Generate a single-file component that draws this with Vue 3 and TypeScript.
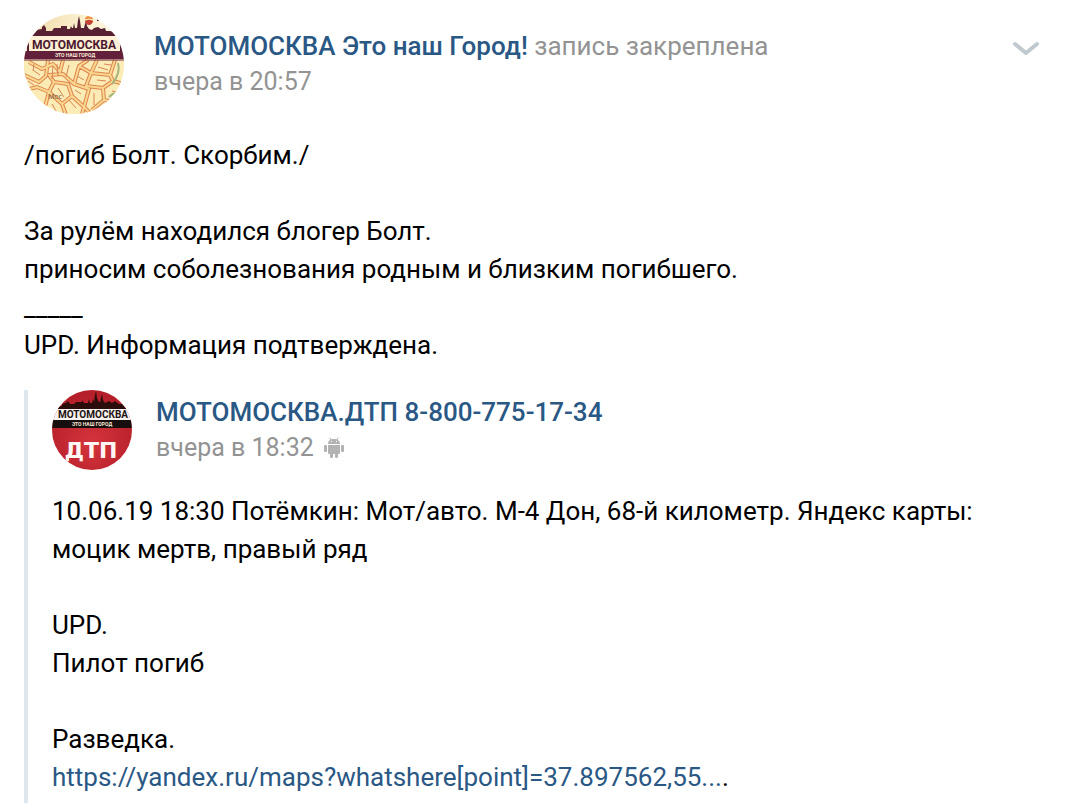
<script setup lang="ts">
interface Message {
  author: string
  time: string
  lines: string[]
}

const post: Message = {
  author: 'МОТОМОСКВА Это наш Город!',
  time: 'вчера в 20:57',
  lines: [
    '/погиб Болт. Скорбим./',
    '',
    'За рулём находился блогер Болт.',
    'приносим соболезнования родным и близким погибшего.',
    '_____',
    'UPD. Информация подтверждена.',
  ],
}

const repost: Message = {
  author: 'МОТОМОСКВА.ДТП 8-800-775-17-34',
  time: 'вчера в 18:32',
  lines: [
    '10.06.19 18:30 Потёмкин: Мот/авто. М-4 Дон, 68-й километр. Яндекс карты:',
    'моцик мертв, правый ряд',
    '',
    'UPD.',
    'Пилот погиб',
    '',
    'Разведка.',
  ],
}

const mapUrl = 'https://yandex.ru/maps?whatshere[point]=37.897562,55'
const mapLabel = 'https://yandex.ru/maps?whatshere[point]=37.897562,55...'

const roads =
  'M-2 60L15 68L22 62L24 46M5 48L18 55L29 50L36 58L39 46M-2 77L13 73L25 78L30 68L25 61L39 60L50 70L55 52L64 46' +
  'M30 68L44 70L48 82L38 90L25 78L19 100M48 82L60 93L65 75L50 70M55 52L67 59L73 46M67 59L62 72L79 74L89 67L100 70' +
  'M79 74L80 86L98 89M65 75L58 100M67 59L86 61L91 46M86 61L89 67M38 90L42 101M60 93L68 101M80 86L68 96'
</script>

<template>
  <article class="post">
    <header class="head">
      <a class="avatar" href="#" aria-label="МОТОМОСКВА">
        <svg viewBox="0 0 100 100" aria-hidden="true">
          <defs>
            <clipPath id="round-post"><circle cx="50" cy="50" r="50" /></clipPath>
            <linearGradient id="sky" x1="0" y1="0" x2="1" y2="0">
              <stop offset="0" stop-color="#f0d9a6" />
              <stop offset="0.6" stop-color="#fbf0cf" />
              <stop offset="1" stop-color="#fdf8e8" />
            </linearGradient>
          </defs>
          <g clip-path="url(#round-post)">
            <rect width="100" height="100" fill="url(#sky)" />
            <path d="M0 22V18H12V16L18 15V13L20 11L22 14V17H28L30 14H37V12H43V15H46L47 12L48 14H49L50 9L51 14H53L54 6L55 2L56 7L57 14H60L61 10L62 7L63 12L65 15L68 16L70 14L74 13L77 15L81 14L82 17H86L90 18H100V22Z" fill="#572033" />
            <circle cx="65" cy="6" r="4" fill="#e98a35" />
            <path d="M61 7Q65 5 69 7Q68 11 65 11Q62 11 61 7Z" fill="#c44233" />
            <path d="M61 6Q65 4 69 6" fill="none" stroke="#fff6db" />
            <rect x="73" y="5" width="2" height="2" fill="#572033" />
            <rect y="20" width="100" height="2" fill="#572033" />
            <rect y="22" width="100" height="15" fill="#fdf0d5" />
            <path d="M4 22V37M97 22V37" stroke="#572033" stroke-width="2" />
            <text x="50" y="35" text-anchor="middle" class="logo-name plum">МОТОМОСКВА</text>
            <rect y="37" width="100" height="8" fill="#62203b" />
            <text x="51" y="43" text-anchor="middle" class="logo-sub">ЭТО НАШ ГОРОД</text>
            <rect y="45" width="100" height="1" fill="#f6dfba" />
            <rect y="46" width="100" height="54" fill="#fbebb4" />
            <g fill="none" stroke-linejoin="round">
              <path :d="roads" stroke="#df8352" stroke-width="4" />
              <path :d="roads" stroke="#f9d98e" stroke-width="2" />
              <path d="M9 56L16 61M29 52L28 65M33 50L34 62M45 51L42 63M7 82L15 89M34 74L40 83M51 76L57 80M70 79L70 91M74 53L84 56M88 77L96 79M80 50L87 51M4 67L10 71M53 62L60 66M45 86L52 94M86 88L88 98M73 66L82 67M10 50L9 57M28 90L32 97" stroke="#d98456" />
              <path d="M94 49Q97 59 88 70M85 83Q91 77 96 81" stroke="#a4b57b" stroke-width="2" />
              <path d="M0 46H100" stroke="#62203b" />
            </g>
            <text x="24" y="85" class="map-label">Мос</text>
          </g>
        </svg>
      </a>
      <div class="info">
        <div class="title"><a class="author" href="#">{{ post.author }}</a> <span class="note">запись закреплена</span></div>
        <div class="time"><time>{{ post.time }}</time></div>
      </div>
      <button class="menu" type="button" aria-label="Действия">
        <svg width="28" height="16" viewBox="0 0 28 16" aria-hidden="true">
          <path d="M3 3L14 12L25 3" fill="none" stroke="#c0c8d0" stroke-width="4" stroke-linecap="round" stroke-linejoin="round" />
        </svg>
      </button>
    </header>

    <div class="text">
      <p v-for="(line, i) in post.lines" :key="i">{{ line }}</p>
    </div>

    <section class="repost">
      <header class="head">
        <a class="avatar small" href="#" aria-label="МОТОМОСКВА.ДТП">
          <svg viewBox="0 0 80 80" aria-hidden="true">
            <defs>
              <clipPath id="round-repost"><circle cx="40" cy="40" r="40" /></clipPath>
              <radialGradient id="red" cx="0.5" cy="0.65" r="0.6">
                <stop offset="0" stop-color="#d5353d" />
                <stop offset="1" stop-color="#b51f2a" />
              </radialGradient>
            </defs>
            <g clip-path="url(#round-repost)">
              <rect width="80" height="80" fill="url(#red)" />
              <path d="M0 19V16H10V14L14 13L16 11L18 14H22L24 12H30V10L32 13H36L37 9L38 13H40L41 9L42 12L43 5L44 1L45 8L47 12H48L49 8L50 4L51 10L53 13L57 11L60 13L63 11L67 14H71L73 16H80V19Z" fill="#2b0d0b" />
              <rect y="18" width="80" height="1" fill="#2b0d0b" />
              <rect y="19" width="80" height="11" fill="#f8f3f0" />
              <text x="41" y="28" text-anchor="middle" class="logo-name compact">МОТОМОСКВА</text>
              <rect y="30" width="80" height="8" fill="#170f0e" />
              <text x="40" y="36" text-anchor="middle" class="logo-sub">ЭТО НАШ ГОРОД</text>
              <text x="39" y="68" text-anchor="middle" class="logo-big">ДТП</text>
            </g>
          </svg>
        </a>
        <div class="info">
          <div class="title"><a class="author" href="#">{{ repost.author }}</a></div>
          <div class="time">
            <time>{{ repost.time }}</time>
            <svg class="android" width="20" height="22" viewBox="0 0 20 22" role="img" aria-label="Android">
              <path d="M6 1L7 3M14 1L13 3" stroke="#b3b3b3" stroke-linecap="round" />
              <path fill="#b3b3b3" fill-rule="evenodd" d="M4 7C4 4 6 2 10 2S16 4 16 7ZM7 4V5H8V4ZM12 4V5H13V4Z" />
              <path fill="#b3b3b3" d="M4 8H16V16Q16 17 15 17H14V20Q14 21 12.500 21T11 20V17H9V20Q9 21 7.500 21T6 20V17H5Q4 17 4 16Z" />
              <rect y="8" width="3" height="7" rx="1" fill="#b3b3b3" />
              <rect x="17" y="8" width="3" height="7" rx="1" fill="#b3b3b3" />
            </svg>
          </div>
        </div>
      </header>
      <div class="text">
        <p v-for="(line, i) in repost.lines" :key="i">{{ line }}</p>
        <p><a class="link" :href="mapUrl">{{ mapLabel }}</a>.</p>
      </div>
    </section>
  </article>
</template>

<style>
body {
  margin: 0;
  background: #fff;
}
</style>

<style scoped>
.post {
  padding: 14px 24px 0;
  font-family: Roboto, "Noto Sans", sans-serif;
  font-size: 26px;
  line-height: 38px;
  color: #000;
}
.head {
  display: flex;
  align-items: center;
}
.avatar {
  flex: none;
  width: 100px;
  height: 100px;
  margin-right: 30px;
}
.avatar.small {
  width: 80px;
  height: 80px;
  margin-right: 24px;
}
.avatar svg {
  display: block;
  width: 100%;
  height: 100%;
}
.info {
  flex: 1;
  min-width: 0;
  line-height: 36px;
}
.author {
  color: #2a5885;
  font-weight: 500;
  text-decoration: none;
}
.note,
.time {
  color: #939393;
}
.time {
  display: flex;
  align-items: center;
  gap: 10px;
  font-size: 25px;
}
.menu {
  align-self: flex-start;
  display: flex;
  margin: 27px 12px 0 0;
  padding: 0;
  border: 0;
  background: none;
  cursor: pointer;
}
.text {
  margin-top: 22px;
}
.text p {
  margin: 0;
  min-height: 38px;
  overflow-wrap: anywhere;
}
.repost {
  margin-top: 26px;
  padding: 0 0 7px 24px;
  border-left: 4px solid #dee6ee;
}
.link {
  color: #2a5885;
  text-decoration: none;
}
.logo-name {
  font: 700 12px Roboto, sans-serif;
  fill: #1c1210;
}
.logo-name.plum {
  fill: #4c1830;
}
.logo-name.compact {
  font-size: 10px;
}
.logo-sub {
  font: 700 5px Roboto, sans-serif;
  fill: #fbe9d6;
}
.logo-big {
  font: 700 22px "DejaVu Sans", sans-serif;
  fill: #fff5f3;
}
.map-label {
  font: 7px "Open Sans", sans-serif;
  fill: #6e4f38;
}
</style>
